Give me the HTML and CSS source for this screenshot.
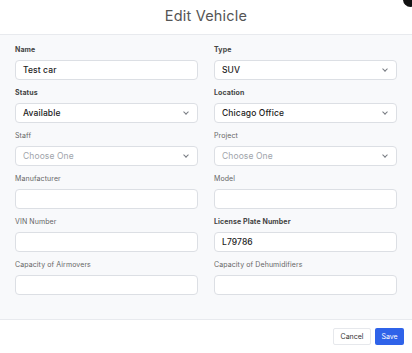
FILE: index.html
```html
<!DOCTYPE html>
<html lang="en">
<head>
  <meta charset="UTF-8" />
  <meta name="viewport" content="width=device-width, initial-scale=1.0"/>
  <title>Edit Vehicle</title>
  <link rel="stylesheet" href="styles.css">
</head>
<body>

  <div class="modal">
    <button class="close-btn" aria-label="Close"></button>
    <div class="modal-header">
      <h2>Edit Vehicle</h2>
    </div>

    <div class="modal-body">
      <div class="field">
        <label class="required">Name</label>
        <div class="input">Test car</div>
      </div>
      <div class="field">
        <label class="required">Type</label>
        <div class="input select">SUV<span class="chevron"></span></div>
      </div>

      <div class="field">
        <label class="required">Status</label>
        <div class="input select">Available<span class="chevron"></span></div>
      </div>
      <div class="field">
        <label class="required">Location</label>
        <div class="input select">Chicago Office<span class="chevron"></span></div>
      </div>

      <div class="field">
        <label>Staff</label>
        <div class="input select placeholder">Choose One<span class="chevron"></span></div>
      </div>
      <div class="field">
        <label>Project</label>
        <div class="input select placeholder">Choose One<span class="chevron"></span></div>
      </div>

      <div class="field">
        <label>Manufacturer</label>
        <div class="input"></div>
      </div>
      <div class="field">
        <label>Model</label>
        <div class="input"></div>
      </div>

      <div class="field">
        <label>VIN Number</label>
        <div class="input"></div>
      </div>
      <div class="field">
        <label class="required">License Plate Number</label>
        <div class="input">L79786</div>
      </div>

      <div class="field">
        <label>Capacity of Airmovers</label>
        <div class="input"></div>
      </div>
      <div class="field">
        <label>Capacity of Dehumidifiers</label>
        <div class="input"></div>
      </div>
    </div>

    <div class="modal-footer">
      <button class="btn btn-cancel">Cancel</button>
      <button class="btn btn-save">Save</button>
    </div>
  </div>

</body>
</html>
```

FILE: styles.css
```css
* {
  margin: 0;
  padding: 0;
  box-sizing: border-box;
  font-family: Inter, 'Noto Sans', sans-serif;
}

html, body {
  height: 100%;
  background: #ffffff;
}

.modal {
  position: relative;
  width: 412px;
  background: #ffffff;
}

.close-btn {
  position: absolute;
  top: -8px;
  right: -6px;
  width: 15px;
  height: 15px;
  border-radius: 50%;
  border: none;
  background: #111111;
}

.modal-header {
  height: 35px;
  border-bottom: 1px solid #e8eaee;
  display: flex;
  align-items: center;
  justify-content: center;
}

.modal-header h2 {
  font-size: 14.5px;
  font-weight: 400;
  color: #555555;
  letter-spacing: 0.2px;
  margin-top: -3px;
}

.modal-body {
  background: #f8f9fb;
  padding: 10px 15px 24px;
  display: grid;
  grid-template-columns: 1fr 1fr;
  column-gap: 16px;
  row-gap: 8px;
  border-bottom: 1px solid #e8eaee;
}

.field {
  display: flex;
  flex-direction: column;
  gap: 5px;
}

.field label {
  font-size: 7px;
  line-height: 10px;
  letter-spacing: 0.1px;
  color: #666666;
}

.field label.required {
  font-weight: 700;
  color: #444444;
}

.input {
  position: relative;
  height: 20px;
  background: #ffffff;
  border: 1px solid #dcdfe4;
  border-radius: 4px;
  padding: 0 7px;
  display: flex;
  align-items: center;
  font-size: 8.5px;
  font-weight: 500;
  letter-spacing: 0.1px;
  color: #222222;
}

.input.placeholder {
  color: #a0a4ab;
  font-weight: 400;
}

.chevron {
  position: absolute;
  right: 9px;
  top: 6px;
  width: 4px;
  height: 4px;
  border-right: 1px solid #777b82;
  border-bottom: 1px solid #777b82;
  transform: rotate(45deg);
}

.modal-footer {
  display: flex;
  justify-content: flex-end;
  gap: 4px;
  padding: 8px 8px 8px;
}

.btn {
  height: 17px;
  padding: 0 6px;
  font-size: 7px;
  border-radius: 2px;
  cursor: pointer;
}

.btn-cancel {
  background: #ffffff;
  border: 1px solid #e6e8ec;
  color: #333333;
  width: 38px;
}

.btn-save {
  background: #2f63e9;
  border: none;
  color: #ffffff;
  width: 29px;
}
```
